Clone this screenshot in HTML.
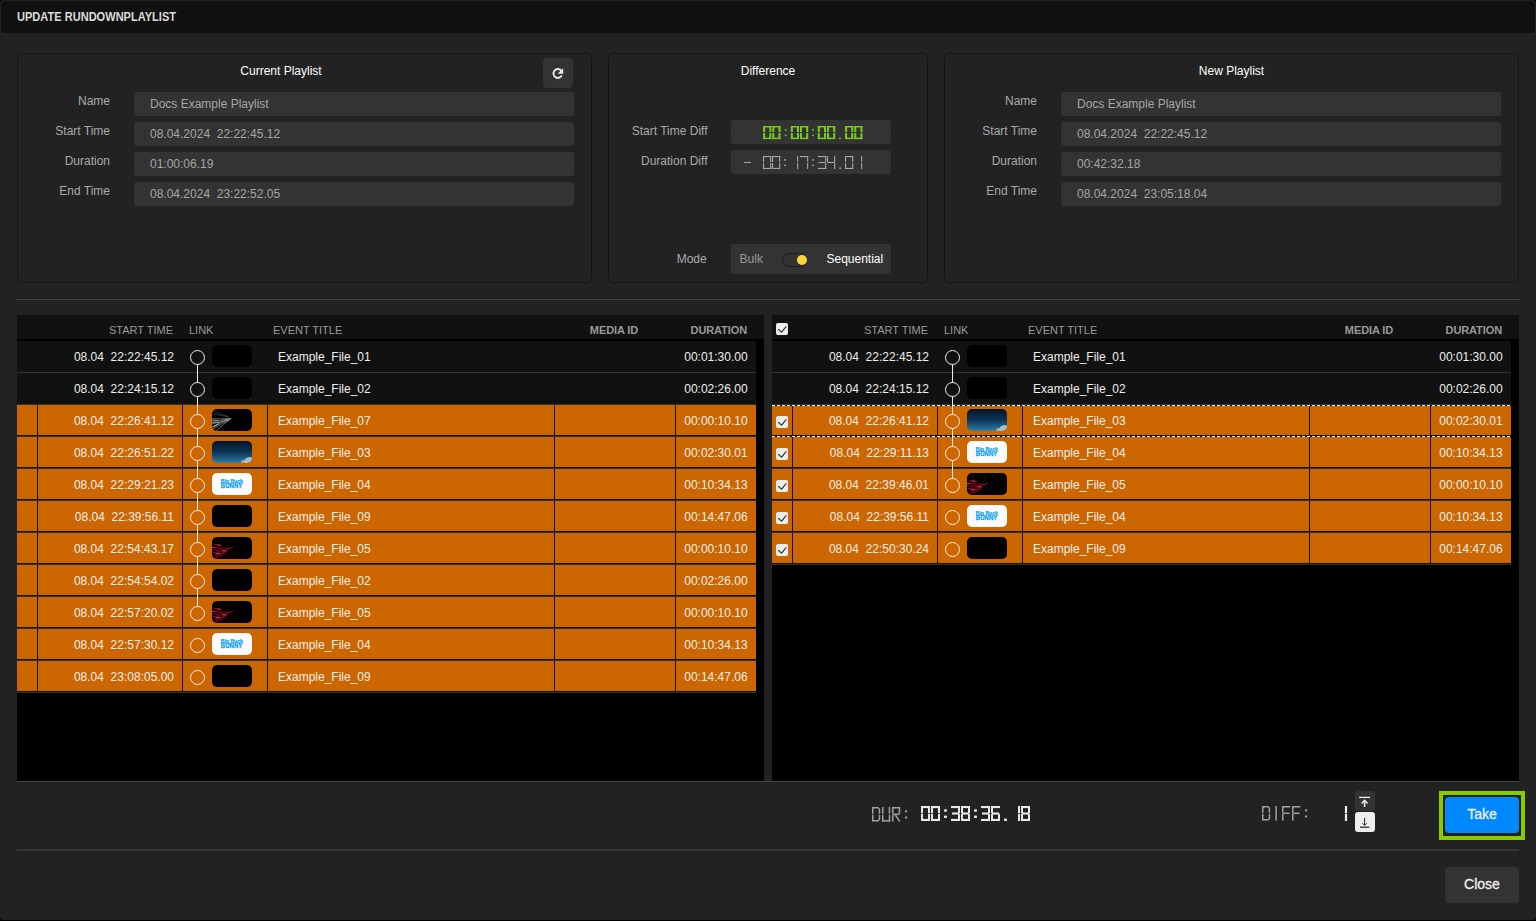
<!DOCTYPE html>
<html><head><meta charset="utf-8"><style>
html,body{margin:0;padding:0;background:#000;}
body{width:1536px;height:921px;overflow:hidden;position:relative;font-family:"Liberation Sans", sans-serif;}
.dlg{position:absolute;left:0;top:0;width:1536px;height:920px;background:#222;border-radius:4px;}
.r{position:absolute;}
.t{position:absolute;white-space:nowrap;}
.cb{width:12px;height:12px;background:#eee;border-radius:2px;}
.cb svg{position:absolute;left:0;top:0;}
</style></head><body>
<div class="dlg"></div>
<div class="r" style="left:1px;top:1px;width:1534px;height:32px;background:#111;border-radius:4px;"></div>
<div class="t" style="top:9.84px;font-size:12px;line-height:14px;color:#dcdcdc;font-weight:bold;left:17px;transform:scaleX(0.921);transform-origin:0 0;">UPDATE RUNDOWNPLAYLIST</div>
<div class="r" style="left:17px;top:53px;width:575px;height:230px;background:transparent;border:1px solid #141414;border-radius:5px;box-sizing:border-box;"></div>
<div class="r" style="left:608px;top:53px;width:320px;height:230px;background:transparent;border:1px solid #141414;border-radius:5px;box-sizing:border-box;"></div>
<div class="r" style="left:944px;top:53px;width:575px;height:230px;background:transparent;border:1px solid #141414;border-radius:5px;box-sizing:border-box;"></div>
<div class="t" style="top:63.84px;font-size:12px;line-height:14px;color:#fff;left:81.0px;width:400px;text-align:center;">Current Playlist</div>
<div class="r" style="left:134px;top:92px;width:440px;height:24px;background:#333;border-radius:3px;"></div>
<div class="t" style="top:93.84px;font-size:12px;line-height:14px;color:#aaa;right:1426px;text-align:right;">Name</div>
<div class="t" style="top:96.84px;font-size:12px;line-height:14px;color:#a6a6a6;left:150px;">Docs Example Playlist</div>
<div class="r" style="left:134px;top:122px;width:440px;height:24px;background:#333;border-radius:3px;"></div>
<div class="t" style="top:123.84px;font-size:12px;line-height:14px;color:#aaa;right:1426px;text-align:right;">Start Time</div>
<div class="t" style="top:126.84px;font-size:12px;line-height:14px;color:#a6a6a6;left:150px;">08.04.2024&nbsp;&nbsp;22:22:45.12</div>
<div class="r" style="left:134px;top:152px;width:440px;height:24px;background:#333;border-radius:3px;"></div>
<div class="t" style="top:153.84px;font-size:12px;line-height:14px;color:#aaa;right:1426px;text-align:right;">Duration</div>
<div class="t" style="top:156.84px;font-size:12px;line-height:14px;color:#a6a6a6;left:150px;">01:00:06.19</div>
<div class="r" style="left:134px;top:182px;width:440px;height:24px;background:#333;border-radius:3px;"></div>
<div class="t" style="top:183.84px;font-size:12px;line-height:14px;color:#aaa;right:1426px;text-align:right;">End Time</div>
<div class="t" style="top:186.84px;font-size:12px;line-height:14px;color:#a6a6a6;left:150px;">08.04.2024&nbsp;&nbsp;23:22:52.05</div>
<div class="r" style="left:543px;top:58px;width:30px;height:30px;background:#333;border-radius:4px;"></div>
<svg class="r" style="left:551px;top:67px" width="14" height="13" viewBox="0 0 14 13"><path d="M10.2 3.6 A4.4 4.4 0 1 0 10.8 8.4" fill="none" stroke="#eee" stroke-width="1.9"/><path d="M12.2 1.2 L12.2 6.8 L6.6 6.8 Z" fill="#eee"/></svg>
<div class="t" style="top:63.84px;font-size:12px;line-height:14px;color:#fff;left:568.0px;width:400px;text-align:center;">Difference</div>
<div class="t" style="top:124.14px;font-size:12px;line-height:14px;color:#aaa;right:828.5px;text-align:right;">Start Time Diff</div>
<div class="t" style="top:154.14px;font-size:12px;line-height:14px;color:#aaa;right:828.5px;text-align:right;">Duration Diff</div>
<div class="r" style="left:731px;top:120px;width:160px;height:24px;background:#333;border-radius:3px;"></div>
<div class="r" style="left:731px;top:150px;width:160px;height:24px;background:#333;border-radius:3px;"></div>
<svg class="r" style="left:763px;top:126px;overflow:visible" width="104.4" height="14.1" viewBox="0 0 104.4 14.1"><g fill="#7acc1c"><rect x="0.10" y="0.00" width="8.20" height="1.45"/><rect x="6.30" y="0.00" width="2.00" height="6.05"/><rect x="6.30" y="7.05" width="2.00" height="6.05"/><rect x="0.10" y="11.65" width="8.20" height="1.45"/><rect x="0.10" y="7.05" width="2.00" height="6.05"/><rect x="0.10" y="0.00" width="2.00" height="6.05"/><rect x="9.30" y="0.00" width="8.20" height="1.45"/><rect x="15.50" y="0.00" width="2.00" height="6.05"/><rect x="15.50" y="7.05" width="2.00" height="6.05"/><rect x="9.30" y="11.65" width="8.20" height="1.45"/><rect x="9.30" y="7.05" width="2.00" height="6.05"/><rect x="9.30" y="0.00" width="2.00" height="6.05"/><rect x="21.80" y="3.18" width="1.80" height="1.50"/><rect x="21.80" y="8.68" width="1.80" height="1.50"/><rect x="27.80" y="0.00" width="8.20" height="1.45"/><rect x="34.00" y="0.00" width="2.00" height="6.05"/><rect x="34.00" y="7.05" width="2.00" height="6.05"/><rect x="27.80" y="11.65" width="8.20" height="1.45"/><rect x="27.80" y="7.05" width="2.00" height="6.05"/><rect x="27.80" y="0.00" width="2.00" height="6.05"/><rect x="37.00" y="0.00" width="8.20" height="1.45"/><rect x="43.20" y="0.00" width="2.00" height="6.05"/><rect x="43.20" y="7.05" width="2.00" height="6.05"/><rect x="37.00" y="11.65" width="8.20" height="1.45"/><rect x="37.00" y="7.05" width="2.00" height="6.05"/><rect x="37.00" y="0.00" width="2.00" height="6.05"/><rect x="49.10" y="3.18" width="1.80" height="1.50"/><rect x="49.10" y="8.68" width="1.80" height="1.50"/><rect x="54.80" y="0.00" width="8.20" height="1.45"/><rect x="61.00" y="0.00" width="2.00" height="6.05"/><rect x="61.00" y="7.05" width="2.00" height="6.05"/><rect x="54.80" y="11.65" width="8.20" height="1.45"/><rect x="54.80" y="7.05" width="2.00" height="6.05"/><rect x="54.80" y="0.00" width="2.00" height="6.05"/><rect x="64.00" y="0.00" width="8.20" height="1.45"/><rect x="70.20" y="0.00" width="2.00" height="6.05"/><rect x="70.20" y="7.05" width="2.00" height="6.05"/><rect x="64.00" y="11.65" width="8.20" height="1.45"/><rect x="64.00" y="7.05" width="2.00" height="6.05"/><rect x="64.00" y="0.00" width="2.00" height="6.05"/><rect x="76.10" y="11.60" width="1.80" height="1.50"/><rect x="82.10" y="0.00" width="8.20" height="1.45"/><rect x="88.30" y="0.00" width="2.00" height="6.05"/><rect x="88.30" y="7.05" width="2.00" height="6.05"/><rect x="82.10" y="11.65" width="8.20" height="1.45"/><rect x="82.10" y="7.05" width="2.00" height="6.05"/><rect x="82.10" y="0.00" width="2.00" height="6.05"/><rect x="91.30" y="0.00" width="8.20" height="1.45"/><rect x="97.50" y="0.00" width="2.00" height="6.05"/><rect x="97.50" y="7.05" width="2.00" height="6.05"/><rect x="91.30" y="11.65" width="8.20" height="1.45"/><rect x="91.30" y="7.05" width="2.00" height="6.05"/><rect x="91.30" y="0.00" width="2.00" height="6.05"/></g></svg>
<svg class="r" style="left:744.8px;top:156px;overflow:visible" width="122.7" height="14.0" viewBox="0 0 122.7 14.0"><g fill="#a8a8a8"><rect x="18.00" y="0.00" width="8.20" height="1.10"/><rect x="25.10" y="0.00" width="1.10" height="6.00"/><rect x="25.10" y="7.00" width="1.10" height="6.00"/><rect x="18.00" y="11.90" width="8.20" height="1.10"/><rect x="18.00" y="7.00" width="1.10" height="6.00"/><rect x="18.00" y="0.00" width="1.10" height="6.00"/><rect x="27.00" y="0.00" width="8.20" height="1.10"/><rect x="34.10" y="0.00" width="1.10" height="6.00"/><rect x="34.10" y="7.00" width="1.10" height="6.00"/><rect x="27.00" y="11.90" width="8.20" height="1.10"/><rect x="27.00" y="7.00" width="1.10" height="6.00"/><rect x="27.00" y="0.00" width="1.10" height="6.00"/><rect x="39.25" y="3.15" width="1.70" height="1.50"/><rect x="39.25" y="8.61" width="1.70" height="1.50"/><rect x="52.10" y="0.00" width="1.10" height="6.00"/><rect x="52.10" y="7.00" width="1.10" height="6.00"/><rect x="55.00" y="0.00" width="8.20" height="1.10"/><rect x="62.10" y="0.00" width="1.10" height="6.00"/><rect x="62.10" y="7.00" width="1.10" height="6.00"/><rect x="67.25" y="3.15" width="1.70" height="1.50"/><rect x="67.25" y="8.61" width="1.70" height="1.50"/><rect x="73.00" y="0.00" width="8.20" height="1.10"/><rect x="80.10" y="0.00" width="1.10" height="6.00"/><rect x="73.55" y="5.95" width="7.10" height="1.10"/><rect x="80.10" y="7.00" width="1.10" height="6.00"/><rect x="73.00" y="11.90" width="8.20" height="1.10"/><rect x="82.00" y="0.00" width="1.10" height="6.00"/><rect x="82.55" y="5.95" width="7.10" height="1.10"/><rect x="89.10" y="0.00" width="1.10" height="6.00"/><rect x="89.10" y="7.00" width="1.10" height="6.00"/><rect x="94.25" y="11.50" width="1.70" height="1.50"/><rect x="100.00" y="0.00" width="8.20" height="1.10"/><rect x="107.10" y="0.00" width="1.10" height="6.00"/><rect x="107.10" y="7.00" width="1.10" height="6.00"/><rect x="100.00" y="11.90" width="8.20" height="1.10"/><rect x="100.00" y="7.00" width="1.10" height="6.00"/><rect x="100.00" y="0.00" width="1.10" height="6.00"/><rect x="116.10" y="0.00" width="1.10" height="6.00"/><rect x="116.10" y="7.00" width="1.10" height="6.00"/></g></svg>
<div class="r" style="left:743.8px;top:162px;width:7.2px;height:1.1px;background:#a8a8a8;"></div>
<div class="t" style="top:251.54px;font-size:12px;line-height:14px;color:#aaa;right:829.3px;text-align:right;">Mode</div>
<div class="r" style="left:731px;top:244px;width:160px;height:30px;background:#333;border-radius:3px;"></div>
<div class="t" style="top:251.54px;font-size:12px;line-height:14px;color:#999;left:739.6px;">Bulk</div>
<div class="r" style="left:782px;top:253px;width:25px;height:14px;background:#333;border-radius:7px;border:1px solid #1c1c1c;box-sizing:border-box;"></div>
<div class="r" style="left:796.8px;top:255px;width:10px;height:10px;border-radius:50%;background:#ffd43b"></div>
<div class="t" style="top:251.54px;font-size:12px;line-height:14px;color:#fff;left:826.5px;">Sequential</div>
<div class="t" style="top:63.84px;font-size:12px;line-height:14px;color:#fff;left:1031.5px;width:400px;text-align:center;">New Playlist</div>
<div class="r" style="left:1061px;top:92px;width:440px;height:24px;background:#333;border-radius:3px;"></div>
<div class="t" style="top:93.84px;font-size:12px;line-height:14px;color:#aaa;right:499px;text-align:right;">Name</div>
<div class="t" style="top:96.84px;font-size:12px;line-height:14px;color:#a6a6a6;left:1077px;">Docs Example Playlist</div>
<div class="r" style="left:1061px;top:122px;width:440px;height:24px;background:#333;border-radius:3px;"></div>
<div class="t" style="top:123.84px;font-size:12px;line-height:14px;color:#aaa;right:499px;text-align:right;">Start Time</div>
<div class="t" style="top:126.84px;font-size:12px;line-height:14px;color:#a6a6a6;left:1077px;">08.04.2024&nbsp;&nbsp;22:22:45.12</div>
<div class="r" style="left:1061px;top:152px;width:440px;height:24px;background:#333;border-radius:3px;"></div>
<div class="t" style="top:153.84px;font-size:12px;line-height:14px;color:#aaa;right:499px;text-align:right;">Duration</div>
<div class="t" style="top:156.84px;font-size:12px;line-height:14px;color:#a6a6a6;left:1077px;">00:42:32.18</div>
<div class="r" style="left:1061px;top:182px;width:440px;height:24px;background:#333;border-radius:3px;"></div>
<div class="t" style="top:183.84px;font-size:12px;line-height:14px;color:#aaa;right:499px;text-align:right;">End Time</div>
<div class="t" style="top:186.84px;font-size:12px;line-height:14px;color:#a6a6a6;left:1077px;">08.04.2024&nbsp;&nbsp;23:05:18.04</div>
<div class="r" style="left:17px;top:298px;width:1502px;height:1px;background:#1d1d1d;"></div>
<div class="r" style="left:17px;top:299px;width:1502px;height:1px;background:#424242;"></div>
<div class="r" style="left:17px;top:315px;width:747px;height:467px;background:#000;"></div>
<div class="r" style="left:17px;top:315px;width:747px;height:24px;background:#111;"></div>
<div class="r" style="left:17px;top:781px;width:747px;height:1px;background:#444;"></div>
<div class="t" style="top:323.69px;font-size:11px;line-height:13px;color:#9a9a9a;right:1363px;text-align:right;">START TIME</div>
<div class="t" style="top:323.69px;font-size:11px;line-height:13px;color:#9a9a9a;left:189px;">LINK</div>
<div class="t" style="top:323.69px;font-size:11px;line-height:13px;color:#9a9a9a;left:273px;">EVENT TITLE</div>
<div class="t" style="top:323.69px;font-size:11px;line-height:13px;color:#999;font-weight:bold;letter-spacing:-0.1px;left:554.0px;width:120px;text-align:center;">MEDIA ID</div>
<div class="t" style="top:323.69px;font-size:11px;line-height:13px;color:#999;font-weight:bold;letter-spacing:-0.1px;right:789px;text-align:right;">DURATION</div>
<div class="r" style="left:17px;top:341px;width:739px;height:31px;background:#111;"></div>
<div class="r" style="left:17px;top:372px;width:739px;height:1px;background:#333;"></div>
<div class="t" style="top:349.84px;font-size:12px;line-height:14px;color:#eee;right:1362px;text-align:right;">08.04&nbsp;&nbsp;22:22:45.12</div>
<div class="t" style="top:349.84px;font-size:12px;line-height:14px;color:#eee;left:278px;">Example_File_01</div>
<div class="t" style="top:349.84px;font-size:12px;line-height:14px;color:#eee;right:788.4px;text-align:right;">00:01:30.00</div>
<div class="r" style="left:212px;top:345px;width:40px;height:22px;border-radius:5px;overflow:hidden;background:#000"></div>
<div class="r" style="left:17px;top:373px;width:739px;height:31px;background:#111;"></div>
<div class="r" style="left:17px;top:404px;width:739px;height:1px;background:#333;"></div>
<div class="t" style="top:381.84px;font-size:12px;line-height:14px;color:#eee;right:1362px;text-align:right;">08.04&nbsp;&nbsp;22:24:15.12</div>
<div class="t" style="top:381.84px;font-size:12px;line-height:14px;color:#eee;left:278px;">Example_File_02</div>
<div class="t" style="top:381.84px;font-size:12px;line-height:14px;color:#eee;right:788.4px;text-align:right;">00:02:26.00</div>
<div class="r" style="left:212px;top:377px;width:40px;height:22px;border-radius:5px;overflow:hidden;background:#000"></div>
<div class="r" style="left:17px;top:405px;width:739px;height:31px;background:#111;"></div>
<div class="r" style="left:17px;top:436px;width:739px;height:1px;background:#333;"></div>
<div class="r" style="left:17px;top:405px;width:20px;height:30px;background:#cc6600;"></div>
<div class="r" style="left:38px;top:405px;width:144px;height:30px;background:#cc6600;"></div>
<div class="r" style="left:183px;top:405px;width:84px;height:30px;background:#cc6600;"></div>
<div class="r" style="left:268px;top:405px;width:286px;height:30px;background:#cc6600;"></div>
<div class="r" style="left:555px;top:405px;width:120px;height:30px;background:#cc6600;"></div>
<div class="r" style="left:676px;top:405px;width:80px;height:30px;background:#cc6600;"></div>
<div class="t" style="top:413.84px;font-size:12px;line-height:14px;color:#eee;right:1362px;text-align:right;">08.04&nbsp;&nbsp;22:26:41.12</div>
<div class="t" style="top:413.84px;font-size:12px;line-height:14px;color:#eee;left:278px;">Example_File_07</div>
<div class="t" style="top:413.84px;font-size:12px;line-height:14px;color:#eee;right:788.4px;text-align:right;">00:00:10.10</div>
<div class="r" style="left:212px;top:409px;width:40px;height:22px;border-radius:5px;overflow:hidden;background:#000"><svg class="r" style="left:0;top:0" width="40" height="22"><g stroke="#bbb" stroke-width="0.6" fill="none" opacity="0.9"><path d="M0 10 L19.5 9.5"/><path d="M0 12.5 L19 9.8"/><path d="M0 15 L18.5 10"/><path d="M0 17.5 L18 10.3"/><path d="M1 20 L17.5 10.5"/><path d="M4 22 L17 11"/><path d="M0 19 L8 13 L16 10.5"/></g><g stroke="#ddd" stroke-width="0.8" opacity="0.8"><path d="M0 11 L6 11.5"/><path d="M0 14 L7 13"/><path d="M1 18 L7 15"/></g><g stroke="#666" stroke-width="0.5" fill="none"><path d="M3 2.5 L16 7.5"/><path d="M2 5 L17 8"/></g></svg></div>
<div class="r" style="left:17px;top:437px;width:739px;height:31px;background:#111;"></div>
<div class="r" style="left:17px;top:468px;width:739px;height:1px;background:#333;"></div>
<div class="r" style="left:17px;top:437px;width:20px;height:30px;background:#cc6600;"></div>
<div class="r" style="left:38px;top:437px;width:144px;height:30px;background:#cc6600;"></div>
<div class="r" style="left:183px;top:437px;width:84px;height:30px;background:#cc6600;"></div>
<div class="r" style="left:268px;top:437px;width:286px;height:30px;background:#cc6600;"></div>
<div class="r" style="left:555px;top:437px;width:120px;height:30px;background:#cc6600;"></div>
<div class="r" style="left:676px;top:437px;width:80px;height:30px;background:#cc6600;"></div>
<div class="t" style="top:445.84px;font-size:12px;line-height:14px;color:#eee;right:1362px;text-align:right;">08.04&nbsp;&nbsp;22:26:51.22</div>
<div class="t" style="top:445.84px;font-size:12px;line-height:14px;color:#eee;left:278px;">Example_File_03</div>
<div class="t" style="top:445.84px;font-size:12px;line-height:14px;color:#eee;right:788.4px;text-align:right;">00:02:30.01</div>
<div class="r" style="left:212px;top:441px;width:40px;height:22px;border-radius:5px;overflow:hidden;background:linear-gradient(#021428,#0a3456 50%,#2f7fa6)"><div class="r" style="left:32px;top:15.5px;width:11px;height:9px;border-radius:6px 6px 0 0;background:#c0cdd2;opacity:0.85"></div><div class="r" style="left:28.5px;top:19px;width:7px;height:5px;border-radius:4px;background:#b0bec4;opacity:0.75"></div></div>
<div class="r" style="left:17px;top:469px;width:739px;height:31px;background:#111;"></div>
<div class="r" style="left:17px;top:500px;width:739px;height:1px;background:#333;"></div>
<div class="r" style="left:17px;top:469px;width:20px;height:30px;background:#cc6600;"></div>
<div class="r" style="left:38px;top:469px;width:144px;height:30px;background:#cc6600;"></div>
<div class="r" style="left:183px;top:469px;width:84px;height:30px;background:#cc6600;"></div>
<div class="r" style="left:268px;top:469px;width:286px;height:30px;background:#cc6600;"></div>
<div class="r" style="left:555px;top:469px;width:120px;height:30px;background:#cc6600;"></div>
<div class="r" style="left:676px;top:469px;width:80px;height:30px;background:#cc6600;"></div>
<div class="t" style="top:477.84px;font-size:12px;line-height:14px;color:#eee;right:1362px;text-align:right;">08.04&nbsp;&nbsp;22:29:21.23</div>
<div class="t" style="top:477.84px;font-size:12px;line-height:14px;color:#eee;left:278px;">Example_File_04</div>
<div class="t" style="top:477.84px;font-size:12px;line-height:14px;color:#eee;right:788.4px;text-align:right;">00:10:34.13</div>
<div class="r" style="left:212px;top:473px;width:40px;height:22px;border-radius:5px;overflow:hidden;background:#fbfbfb"><svg class="r" style="left:0;top:0" width="40" height="22"><g font-family="Liberation Sans" font-weight="bold" fill="#10a6f0" stroke="#10a6f0" stroke-width="0.25"><text x="8.8" y="10.2" font-size="6.2" textLength="22" lengthAdjust="spacingAndGlyphs">Big Buck</text><text x="8.8" y="15.2" font-size="6.4" textLength="21.5" lengthAdjust="spacingAndGlyphs" fill="#0a9cf0">BUNNY</text></g></svg></div>
<div class="r" style="left:17px;top:501px;width:739px;height:31px;background:#111;"></div>
<div class="r" style="left:17px;top:532px;width:739px;height:1px;background:#333;"></div>
<div class="r" style="left:17px;top:501px;width:20px;height:30px;background:#cc6600;"></div>
<div class="r" style="left:38px;top:501px;width:144px;height:30px;background:#cc6600;"></div>
<div class="r" style="left:183px;top:501px;width:84px;height:30px;background:#cc6600;"></div>
<div class="r" style="left:268px;top:501px;width:286px;height:30px;background:#cc6600;"></div>
<div class="r" style="left:555px;top:501px;width:120px;height:30px;background:#cc6600;"></div>
<div class="r" style="left:676px;top:501px;width:80px;height:30px;background:#cc6600;"></div>
<div class="t" style="top:509.84px;font-size:12px;line-height:14px;color:#eee;right:1362px;text-align:right;">08.04&nbsp;&nbsp;22:39:56.11</div>
<div class="t" style="top:509.84px;font-size:12px;line-height:14px;color:#eee;left:278px;">Example_File_09</div>
<div class="t" style="top:509.84px;font-size:12px;line-height:14px;color:#eee;right:788.4px;text-align:right;">00:14:47.06</div>
<div class="r" style="left:212px;top:505px;width:40px;height:22px;border-radius:5px;overflow:hidden;background:#000"></div>
<div class="r" style="left:17px;top:533px;width:739px;height:31px;background:#111;"></div>
<div class="r" style="left:17px;top:564px;width:739px;height:1px;background:#333;"></div>
<div class="r" style="left:17px;top:533px;width:20px;height:30px;background:#cc6600;"></div>
<div class="r" style="left:38px;top:533px;width:144px;height:30px;background:#cc6600;"></div>
<div class="r" style="left:183px;top:533px;width:84px;height:30px;background:#cc6600;"></div>
<div class="r" style="left:268px;top:533px;width:286px;height:30px;background:#cc6600;"></div>
<div class="r" style="left:555px;top:533px;width:120px;height:30px;background:#cc6600;"></div>
<div class="r" style="left:676px;top:533px;width:80px;height:30px;background:#cc6600;"></div>
<div class="t" style="top:541.84px;font-size:12px;line-height:14px;color:#eee;right:1362px;text-align:right;">08.04&nbsp;&nbsp;22:54:43.17</div>
<div class="t" style="top:541.84px;font-size:12px;line-height:14px;color:#eee;left:278px;">Example_File_05</div>
<div class="t" style="top:541.84px;font-size:12px;line-height:14px;color:#eee;right:788.4px;text-align:right;">00:00:10.10</div>
<div class="r" style="left:212px;top:537px;width:40px;height:22px;border-radius:5px;overflow:hidden;background:#000"><svg class="r" style="left:0;top:0" width="40" height="22"><g stroke="#b50c1c" stroke-width="1" fill="none" opacity="0.9"><path d="M2 7.5 L10 8.5"/><path d="M0 10.5 L18 11.5 L21 10"/><path d="M0 13 L16 13"/><path d="M1 15.5 L15 14.5"/><path d="M2 18 L14 16"/><path d="M3 20 L11 18"/></g><g stroke="#e05090" stroke-width="0.8" opacity="0.8"><path d="M0 10.5 L3 10.5"/><path d="M10 13.5 L14 13.5"/><path d="M4 16.5 L8 16.5"/><path d="M5 8 L8 8"/></g><g fill="#8a0a18"><circle cx="6" cy="4" r="0.7"/><circle cx="13" cy="3.5" r="0.6"/><circle cx="18" cy="2.5" r="0.6"/><circle cx="18" cy="5.2" r="0.6"/><circle cx="26" cy="3" r="0.6"/><circle cx="25" cy="9.5" r="0.6"/><circle cx="20" cy="15.5" r="0.5"/><circle cx="29" cy="6.5" r="0.4"/></g></svg></div>
<div class="r" style="left:17px;top:565px;width:739px;height:31px;background:#111;"></div>
<div class="r" style="left:17px;top:596px;width:739px;height:1px;background:#333;"></div>
<div class="r" style="left:17px;top:565px;width:20px;height:30px;background:#cc6600;"></div>
<div class="r" style="left:38px;top:565px;width:144px;height:30px;background:#cc6600;"></div>
<div class="r" style="left:183px;top:565px;width:84px;height:30px;background:#cc6600;"></div>
<div class="r" style="left:268px;top:565px;width:286px;height:30px;background:#cc6600;"></div>
<div class="r" style="left:555px;top:565px;width:120px;height:30px;background:#cc6600;"></div>
<div class="r" style="left:676px;top:565px;width:80px;height:30px;background:#cc6600;"></div>
<div class="t" style="top:573.84px;font-size:12px;line-height:14px;color:#eee;right:1362px;text-align:right;">08.04&nbsp;&nbsp;22:54:54.02</div>
<div class="t" style="top:573.84px;font-size:12px;line-height:14px;color:#eee;left:278px;">Example_File_02</div>
<div class="t" style="top:573.84px;font-size:12px;line-height:14px;color:#eee;right:788.4px;text-align:right;">00:02:26.00</div>
<div class="r" style="left:212px;top:569px;width:40px;height:22px;border-radius:5px;overflow:hidden;background:#000"></div>
<div class="r" style="left:17px;top:597px;width:739px;height:31px;background:#111;"></div>
<div class="r" style="left:17px;top:628px;width:739px;height:1px;background:#333;"></div>
<div class="r" style="left:17px;top:597px;width:20px;height:30px;background:#cc6600;"></div>
<div class="r" style="left:38px;top:597px;width:144px;height:30px;background:#cc6600;"></div>
<div class="r" style="left:183px;top:597px;width:84px;height:30px;background:#cc6600;"></div>
<div class="r" style="left:268px;top:597px;width:286px;height:30px;background:#cc6600;"></div>
<div class="r" style="left:555px;top:597px;width:120px;height:30px;background:#cc6600;"></div>
<div class="r" style="left:676px;top:597px;width:80px;height:30px;background:#cc6600;"></div>
<div class="t" style="top:605.84px;font-size:12px;line-height:14px;color:#eee;right:1362px;text-align:right;">08.04&nbsp;&nbsp;22:57:20.02</div>
<div class="t" style="top:605.84px;font-size:12px;line-height:14px;color:#eee;left:278px;">Example_File_05</div>
<div class="t" style="top:605.84px;font-size:12px;line-height:14px;color:#eee;right:788.4px;text-align:right;">00:00:10.10</div>
<div class="r" style="left:212px;top:601px;width:40px;height:22px;border-radius:5px;overflow:hidden;background:#000"><svg class="r" style="left:0;top:0" width="40" height="22"><g stroke="#b50c1c" stroke-width="1" fill="none" opacity="0.9"><path d="M2 7.5 L10 8.5"/><path d="M0 10.5 L18 11.5 L21 10"/><path d="M0 13 L16 13"/><path d="M1 15.5 L15 14.5"/><path d="M2 18 L14 16"/><path d="M3 20 L11 18"/></g><g stroke="#e05090" stroke-width="0.8" opacity="0.8"><path d="M0 10.5 L3 10.5"/><path d="M10 13.5 L14 13.5"/><path d="M4 16.5 L8 16.5"/><path d="M5 8 L8 8"/></g><g fill="#8a0a18"><circle cx="6" cy="4" r="0.7"/><circle cx="13" cy="3.5" r="0.6"/><circle cx="18" cy="2.5" r="0.6"/><circle cx="18" cy="5.2" r="0.6"/><circle cx="26" cy="3" r="0.6"/><circle cx="25" cy="9.5" r="0.6"/><circle cx="20" cy="15.5" r="0.5"/><circle cx="29" cy="6.5" r="0.4"/></g></svg></div>
<div class="r" style="left:17px;top:629px;width:739px;height:31px;background:#111;"></div>
<div class="r" style="left:17px;top:660px;width:739px;height:1px;background:#333;"></div>
<div class="r" style="left:17px;top:629px;width:20px;height:30px;background:#cc6600;"></div>
<div class="r" style="left:38px;top:629px;width:144px;height:30px;background:#cc6600;"></div>
<div class="r" style="left:183px;top:629px;width:84px;height:30px;background:#cc6600;"></div>
<div class="r" style="left:268px;top:629px;width:286px;height:30px;background:#cc6600;"></div>
<div class="r" style="left:555px;top:629px;width:120px;height:30px;background:#cc6600;"></div>
<div class="r" style="left:676px;top:629px;width:80px;height:30px;background:#cc6600;"></div>
<div class="t" style="top:637.84px;font-size:12px;line-height:14px;color:#eee;right:1362px;text-align:right;">08.04&nbsp;&nbsp;22:57:30.12</div>
<div class="t" style="top:637.84px;font-size:12px;line-height:14px;color:#eee;left:278px;">Example_File_04</div>
<div class="t" style="top:637.84px;font-size:12px;line-height:14px;color:#eee;right:788.4px;text-align:right;">00:10:34.13</div>
<div class="r" style="left:212px;top:633px;width:40px;height:22px;border-radius:5px;overflow:hidden;background:#fbfbfb"><svg class="r" style="left:0;top:0" width="40" height="22"><g font-family="Liberation Sans" font-weight="bold" fill="#10a6f0" stroke="#10a6f0" stroke-width="0.25"><text x="8.8" y="10.2" font-size="6.2" textLength="22" lengthAdjust="spacingAndGlyphs">Big Buck</text><text x="8.8" y="15.2" font-size="6.4" textLength="21.5" lengthAdjust="spacingAndGlyphs" fill="#0a9cf0">BUNNY</text></g></svg></div>
<div class="r" style="left:17px;top:661px;width:739px;height:31px;background:#111;"></div>
<div class="r" style="left:17px;top:692px;width:739px;height:1px;background:#333;"></div>
<div class="r" style="left:17px;top:661px;width:20px;height:30px;background:#cc6600;"></div>
<div class="r" style="left:38px;top:661px;width:144px;height:30px;background:#cc6600;"></div>
<div class="r" style="left:183px;top:661px;width:84px;height:30px;background:#cc6600;"></div>
<div class="r" style="left:268px;top:661px;width:286px;height:30px;background:#cc6600;"></div>
<div class="r" style="left:555px;top:661px;width:120px;height:30px;background:#cc6600;"></div>
<div class="r" style="left:676px;top:661px;width:80px;height:30px;background:#cc6600;"></div>
<div class="t" style="top:669.84px;font-size:12px;line-height:14px;color:#eee;right:1362px;text-align:right;">08.04&nbsp;&nbsp;23:08:05.00</div>
<div class="t" style="top:669.84px;font-size:12px;line-height:14px;color:#eee;left:278px;">Example_File_09</div>
<div class="t" style="top:669.84px;font-size:12px;line-height:14px;color:#eee;right:788.4px;text-align:right;">00:14:47.06</div>
<div class="r" style="left:212px;top:665px;width:40px;height:22px;border-radius:5px;overflow:hidden;background:#000"></div>
<div class="r" style="left:17px;top:691px;width:739px;height:1px;background:#111;"></div>
<div class="r" style="left:17px;top:692px;width:739px;height:1px;background:#333;"></div>
<div class="r" style="left:197px;top:357px;width:1px;height:256px;background:#eee;"></div>
<div class="r" style="left:190.0px;top:349.6px;width:13.2px;height:13.2px;border:1px solid #eee;border-radius:50%;background:#111"></div>
<div class="r" style="left:190.0px;top:381.6px;width:13.2px;height:13.2px;border:1px solid #eee;border-radius:50%;background:#111"></div>
<div class="r" style="left:190.0px;top:413.6px;width:13.2px;height:13.2px;border:1px solid #eee;border-radius:50%;background:#cc6600"></div>
<div class="r" style="left:190.0px;top:445.6px;width:13.2px;height:13.2px;border:1px solid #eee;border-radius:50%;background:#cc6600"></div>
<div class="r" style="left:190.0px;top:477.6px;width:13.2px;height:13.2px;border:1px solid #eee;border-radius:50%;background:#cc6600"></div>
<div class="r" style="left:190.0px;top:509.6px;width:13.2px;height:13.2px;border:1px solid #eee;border-radius:50%;background:#cc6600"></div>
<div class="r" style="left:190.0px;top:541.6px;width:13.2px;height:13.2px;border:1px solid #eee;border-radius:50%;background:#cc6600"></div>
<div class="r" style="left:190.0px;top:573.6px;width:13.2px;height:13.2px;border:1px solid #eee;border-radius:50%;background:#cc6600"></div>
<div class="r" style="left:190.0px;top:605.6px;width:13.2px;height:13.2px;border:1px solid #eee;border-radius:50%;background:#cc6600"></div>
<div class="r" style="left:190.0px;top:637.6px;width:13.2px;height:13.2px;border:1px solid #eee;border-radius:50%;background:#cc6600"></div>
<div class="r" style="left:190.0px;top:669.6px;width:13.2px;height:13.2px;border:1px solid #eee;border-radius:50%;background:#cc6600"></div>
<div class="r" style="left:772px;top:315px;width:747px;height:467px;background:#000;"></div>
<div class="r" style="left:772px;top:315px;width:747px;height:24px;background:#111;"></div>
<div class="r" style="left:772px;top:781px;width:747px;height:1px;background:#444;"></div>
<div class="r cb" style="left:776px;top:323px"><svg width="12" height="12"><path d="M2.2 6.2 L5.6 9.1 L10.3 3.3" stroke="#333" stroke-width="1.15" fill="none"/></svg></div>
<div class="t" style="top:323.69px;font-size:11px;line-height:13px;color:#9a9a9a;right:608px;text-align:right;">START TIME</div>
<div class="t" style="top:323.69px;font-size:11px;line-height:13px;color:#9a9a9a;left:944px;">LINK</div>
<div class="t" style="top:323.69px;font-size:11px;line-height:13px;color:#9a9a9a;left:1028px;">EVENT TITLE</div>
<div class="t" style="top:323.69px;font-size:11px;line-height:13px;color:#999;font-weight:bold;letter-spacing:-0.1px;left:1309.0px;width:120px;text-align:center;">MEDIA ID</div>
<div class="t" style="top:323.69px;font-size:11px;line-height:13px;color:#999;font-weight:bold;letter-spacing:-0.1px;right:34px;text-align:right;">DURATION</div>
<div class="r" style="left:772px;top:341px;width:739px;height:31px;background:#111;"></div>
<div class="r" style="left:772px;top:372px;width:739px;height:1px;background:#333;"></div>
<div class="t" style="top:349.84px;font-size:12px;line-height:14px;color:#eee;right:607px;text-align:right;">08.04&nbsp;&nbsp;22:22:45.12</div>
<div class="t" style="top:349.84px;font-size:12px;line-height:14px;color:#eee;left:1033px;">Example_File_01</div>
<div class="t" style="top:349.84px;font-size:12px;line-height:14px;color:#eee;right:33.40000000000009px;text-align:right;">00:01:30.00</div>
<div class="r" style="left:967px;top:345px;width:40px;height:22px;border-radius:5px;overflow:hidden;background:#000"></div>
<div class="r" style="left:772px;top:373px;width:739px;height:31px;background:#111;"></div>
<div class="r" style="left:772px;top:404px;width:739px;height:1px;background:#333;"></div>
<div class="t" style="top:381.84px;font-size:12px;line-height:14px;color:#eee;right:607px;text-align:right;">08.04&nbsp;&nbsp;22:24:15.12</div>
<div class="t" style="top:381.84px;font-size:12px;line-height:14px;color:#eee;left:1033px;">Example_File_02</div>
<div class="t" style="top:381.84px;font-size:12px;line-height:14px;color:#eee;right:33.40000000000009px;text-align:right;">00:02:26.00</div>
<div class="r" style="left:967px;top:377px;width:40px;height:22px;border-radius:5px;overflow:hidden;background:#000"></div>
<div class="r" style="left:772px;top:405px;width:739px;height:31px;background:#111;"></div>
<div class="r" style="left:772px;top:436px;width:739px;height:1px;background:#333;"></div>
<div class="r" style="left:772px;top:405px;width:20px;height:30px;background:#cc6600;"></div>
<div class="r" style="left:793px;top:405px;width:144px;height:30px;background:#cc6600;"></div>
<div class="r" style="left:938px;top:405px;width:84px;height:30px;background:#cc6600;"></div>
<div class="r" style="left:1023px;top:405px;width:286px;height:30px;background:#cc6600;"></div>
<div class="r" style="left:1310px;top:405px;width:120px;height:30px;background:#cc6600;"></div>
<div class="r" style="left:1431px;top:405px;width:80px;height:30px;background:#cc6600;"></div>
<div class="r cb" style="left:776px;top:416px"><svg width="12" height="12"><path d="M2.2 6.2 L5.6 9.1 L10.3 3.3" stroke="#333" stroke-width="1.15" fill="none"/></svg></div>
<div class="t" style="top:413.84px;font-size:12px;line-height:14px;color:#eee;right:607px;text-align:right;">08.04&nbsp;&nbsp;22:26:41.12</div>
<div class="t" style="top:413.84px;font-size:12px;line-height:14px;color:#eee;left:1033px;">Example_File_03</div>
<div class="t" style="top:413.84px;font-size:12px;line-height:14px;color:#eee;right:33.40000000000009px;text-align:right;">00:02:30.01</div>
<div class="r" style="left:967px;top:409px;width:40px;height:22px;border-radius:5px;overflow:hidden;background:linear-gradient(#021428,#0a3456 50%,#2f7fa6)"><div class="r" style="left:32px;top:15.5px;width:11px;height:9px;border-radius:6px 6px 0 0;background:#c0cdd2;opacity:0.85"></div><div class="r" style="left:28.5px;top:19px;width:7px;height:5px;border-radius:4px;background:#b0bec4;opacity:0.75"></div></div>
<div class="r" style="left:772px;top:437px;width:739px;height:31px;background:#111;"></div>
<div class="r" style="left:772px;top:468px;width:739px;height:1px;background:#333;"></div>
<div class="r" style="left:772px;top:437px;width:20px;height:30px;background:#cc6600;"></div>
<div class="r" style="left:793px;top:437px;width:144px;height:30px;background:#cc6600;"></div>
<div class="r" style="left:938px;top:437px;width:84px;height:30px;background:#cc6600;"></div>
<div class="r" style="left:1023px;top:437px;width:286px;height:30px;background:#cc6600;"></div>
<div class="r" style="left:1310px;top:437px;width:120px;height:30px;background:#cc6600;"></div>
<div class="r" style="left:1431px;top:437px;width:80px;height:30px;background:#cc6600;"></div>
<div class="r cb" style="left:776px;top:448px"><svg width="12" height="12"><path d="M2.2 6.2 L5.6 9.1 L10.3 3.3" stroke="#333" stroke-width="1.15" fill="none"/></svg></div>
<div class="t" style="top:445.84px;font-size:12px;line-height:14px;color:#eee;right:607px;text-align:right;">08.04&nbsp;&nbsp;22:29:11.13</div>
<div class="t" style="top:445.84px;font-size:12px;line-height:14px;color:#eee;left:1033px;">Example_File_04</div>
<div class="t" style="top:445.84px;font-size:12px;line-height:14px;color:#eee;right:33.40000000000009px;text-align:right;">00:10:34.13</div>
<div class="r" style="left:967px;top:441px;width:40px;height:22px;border-radius:5px;overflow:hidden;background:#fbfbfb"><svg class="r" style="left:0;top:0" width="40" height="22"><g font-family="Liberation Sans" font-weight="bold" fill="#10a6f0" stroke="#10a6f0" stroke-width="0.25"><text x="8.8" y="10.2" font-size="6.2" textLength="22" lengthAdjust="spacingAndGlyphs">Big Buck</text><text x="8.8" y="15.2" font-size="6.4" textLength="21.5" lengthAdjust="spacingAndGlyphs" fill="#0a9cf0">BUNNY</text></g></svg></div>
<div class="r" style="left:772px;top:469px;width:739px;height:31px;background:#111;"></div>
<div class="r" style="left:772px;top:500px;width:739px;height:1px;background:#333;"></div>
<div class="r" style="left:772px;top:469px;width:20px;height:30px;background:#cc6600;"></div>
<div class="r" style="left:793px;top:469px;width:144px;height:30px;background:#cc6600;"></div>
<div class="r" style="left:938px;top:469px;width:84px;height:30px;background:#cc6600;"></div>
<div class="r" style="left:1023px;top:469px;width:286px;height:30px;background:#cc6600;"></div>
<div class="r" style="left:1310px;top:469px;width:120px;height:30px;background:#cc6600;"></div>
<div class="r" style="left:1431px;top:469px;width:80px;height:30px;background:#cc6600;"></div>
<div class="r cb" style="left:776px;top:480px"><svg width="12" height="12"><path d="M2.2 6.2 L5.6 9.1 L10.3 3.3" stroke="#333" stroke-width="1.15" fill="none"/></svg></div>
<div class="t" style="top:477.84px;font-size:12px;line-height:14px;color:#eee;right:607px;text-align:right;">08.04&nbsp;&nbsp;22:39:46.01</div>
<div class="t" style="top:477.84px;font-size:12px;line-height:14px;color:#eee;left:1033px;">Example_File_05</div>
<div class="t" style="top:477.84px;font-size:12px;line-height:14px;color:#eee;right:33.40000000000009px;text-align:right;">00:00:10.10</div>
<div class="r" style="left:967px;top:473px;width:40px;height:22px;border-radius:5px;overflow:hidden;background:#000"><svg class="r" style="left:0;top:0" width="40" height="22"><g stroke="#b50c1c" stroke-width="1" fill="none" opacity="0.9"><path d="M2 7.5 L10 8.5"/><path d="M0 10.5 L18 11.5 L21 10"/><path d="M0 13 L16 13"/><path d="M1 15.5 L15 14.5"/><path d="M2 18 L14 16"/><path d="M3 20 L11 18"/></g><g stroke="#e05090" stroke-width="0.8" opacity="0.8"><path d="M0 10.5 L3 10.5"/><path d="M10 13.5 L14 13.5"/><path d="M4 16.5 L8 16.5"/><path d="M5 8 L8 8"/></g><g fill="#8a0a18"><circle cx="6" cy="4" r="0.7"/><circle cx="13" cy="3.5" r="0.6"/><circle cx="18" cy="2.5" r="0.6"/><circle cx="18" cy="5.2" r="0.6"/><circle cx="26" cy="3" r="0.6"/><circle cx="25" cy="9.5" r="0.6"/><circle cx="20" cy="15.5" r="0.5"/><circle cx="29" cy="6.5" r="0.4"/></g></svg></div>
<div class="r" style="left:772px;top:501px;width:739px;height:31px;background:#111;"></div>
<div class="r" style="left:772px;top:532px;width:739px;height:1px;background:#333;"></div>
<div class="r" style="left:772px;top:501px;width:20px;height:30px;background:#cc6600;"></div>
<div class="r" style="left:793px;top:501px;width:144px;height:30px;background:#cc6600;"></div>
<div class="r" style="left:938px;top:501px;width:84px;height:30px;background:#cc6600;"></div>
<div class="r" style="left:1023px;top:501px;width:286px;height:30px;background:#cc6600;"></div>
<div class="r" style="left:1310px;top:501px;width:120px;height:30px;background:#cc6600;"></div>
<div class="r" style="left:1431px;top:501px;width:80px;height:30px;background:#cc6600;"></div>
<div class="r cb" style="left:776px;top:512px"><svg width="12" height="12"><path d="M2.2 6.2 L5.6 9.1 L10.3 3.3" stroke="#333" stroke-width="1.15" fill="none"/></svg></div>
<div class="t" style="top:509.84px;font-size:12px;line-height:14px;color:#eee;right:607px;text-align:right;">08.04&nbsp;&nbsp;22:39:56.11</div>
<div class="t" style="top:509.84px;font-size:12px;line-height:14px;color:#eee;left:1033px;">Example_File_04</div>
<div class="t" style="top:509.84px;font-size:12px;line-height:14px;color:#eee;right:33.40000000000009px;text-align:right;">00:10:34.13</div>
<div class="r" style="left:967px;top:505px;width:40px;height:22px;border-radius:5px;overflow:hidden;background:#fbfbfb"><svg class="r" style="left:0;top:0" width="40" height="22"><g font-family="Liberation Sans" font-weight="bold" fill="#10a6f0" stroke="#10a6f0" stroke-width="0.25"><text x="8.8" y="10.2" font-size="6.2" textLength="22" lengthAdjust="spacingAndGlyphs">Big Buck</text><text x="8.8" y="15.2" font-size="6.4" textLength="21.5" lengthAdjust="spacingAndGlyphs" fill="#0a9cf0">BUNNY</text></g></svg></div>
<div class="r" style="left:772px;top:533px;width:739px;height:31px;background:#111;"></div>
<div class="r" style="left:772px;top:564px;width:739px;height:1px;background:#333;"></div>
<div class="r" style="left:772px;top:533px;width:20px;height:30px;background:#cc6600;"></div>
<div class="r" style="left:793px;top:533px;width:144px;height:30px;background:#cc6600;"></div>
<div class="r" style="left:938px;top:533px;width:84px;height:30px;background:#cc6600;"></div>
<div class="r" style="left:1023px;top:533px;width:286px;height:30px;background:#cc6600;"></div>
<div class="r" style="left:1310px;top:533px;width:120px;height:30px;background:#cc6600;"></div>
<div class="r" style="left:1431px;top:533px;width:80px;height:30px;background:#cc6600;"></div>
<div class="r cb" style="left:776px;top:544px"><svg width="12" height="12"><path d="M2.2 6.2 L5.6 9.1 L10.3 3.3" stroke="#333" stroke-width="1.15" fill="none"/></svg></div>
<div class="t" style="top:541.84px;font-size:12px;line-height:14px;color:#eee;right:607px;text-align:right;">08.04&nbsp;&nbsp;22:50:30.24</div>
<div class="t" style="top:541.84px;font-size:12px;line-height:14px;color:#eee;left:1033px;">Example_File_09</div>
<div class="t" style="top:541.84px;font-size:12px;line-height:14px;color:#eee;right:33.40000000000009px;text-align:right;">00:14:47.06</div>
<div class="r" style="left:967px;top:537px;width:40px;height:22px;border-radius:5px;overflow:hidden;background:#000"></div>
<div class="r" style="left:772px;top:563px;width:739px;height:1px;background:#111;"></div>
<div class="r" style="left:772px;top:564px;width:739px;height:1px;background:#333;"></div>
<div class="r" style="left:772px;top:405px;width:739px;height:1px;background:repeating-linear-gradient(90deg,#fff 0 3px,#000 3px 5px)"></div>
<div class="r" style="left:772px;top:436px;width:739px;height:1px;background:repeating-linear-gradient(90deg,#fff 0 3px,#000 3px 5px)"></div>
<div class="r" style="left:952px;top:357px;width:1px;height:128px;background:#eee;"></div>
<div class="r" style="left:945.0px;top:349.6px;width:13.2px;height:13.2px;border:1px solid #eee;border-radius:50%;background:#111"></div>
<div class="r" style="left:945.0px;top:381.6px;width:13.2px;height:13.2px;border:1px solid #eee;border-radius:50%;background:#111"></div>
<div class="r" style="left:945.0px;top:413.6px;width:13.2px;height:13.2px;border:1px solid #eee;border-radius:50%;background:#cc6600"></div>
<div class="r" style="left:945.0px;top:445.6px;width:13.2px;height:13.2px;border:1px solid #eee;border-radius:50%;background:#cc6600"></div>
<div class="r" style="left:945.0px;top:477.6px;width:13.2px;height:13.2px;border:1px solid #eee;border-radius:50%;background:#cc6600"></div>
<div class="r" style="left:945.0px;top:509.6px;width:13.2px;height:13.2px;border:1px solid #eee;border-radius:50%;background:#cc6600"></div>
<div class="r" style="left:945.0px;top:541.6px;width:13.2px;height:13.2px;border:1px solid #eee;border-radius:50%;background:#cc6600"></div>
<div class="r" style="left:17px;top:781px;width:1502px;height:1px;background:#444;"></div>
<svg class="r" style="left:871.7px;top:806.6px;overflow:visible" width="44.8" height="15.6" viewBox="0 0 44.8 15.6"><g fill="#a0a0a0"><path d="M0.00 0 H6.25 L8.20 1.95 V6.80 H6.70 V2.35 L5.85 1.50 H1.50 V6.80 H0.00 Z"/><path d="M0.00 14.60 H6.25 L8.20 12.65 V7.80 H6.70 V12.25 L5.85 13.10 H1.50 V7.80 H0.00 Z"/><rect x="16.70" y="0.00" width="1.50" height="6.80"/><rect x="16.70" y="7.80" width="1.50" height="6.80"/><rect x="10.00" y="13.10" width="8.20" height="1.50"/><rect x="10.00" y="7.80" width="1.50" height="6.80"/><rect x="10.00" y="0.00" width="1.50" height="6.80"/><rect x="20.00" y="0.00" width="8.20" height="1.50"/><rect x="26.70" y="0.00" width="1.50" height="6.80"/><rect x="20.00" y="7.80" width="1.50" height="6.80"/><rect x="20.00" y="0.00" width="1.50" height="6.80"/><rect x="20.75" y="6.55" width="6.70" height="1.50"/><path d="M23.28 8.05 L27.90 14.60" stroke="#a0a0a0" stroke-width="1.50" fill="none"/><rect x="33.05" y="3.38" width="2.10" height="2.00"/><rect x="33.05" y="9.51" width="2.10" height="2.00"/></g></svg>
<svg class="r" style="left:921.3px;top:806px;overflow:visible" width="113.3" height="16.0" viewBox="0 0 113.3 16.0"><g fill="#e8e8e8"><rect x="0.00" y="0.00" width="9.00" height="2.10"/><rect x="7.00" y="0.00" width="2.00" height="7.15"/><rect x="7.00" y="7.85" width="2.00" height="7.15"/><rect x="0.00" y="12.90" width="9.00" height="2.10"/><rect x="0.00" y="7.85" width="2.00" height="7.15"/><rect x="0.00" y="0.00" width="2.00" height="7.15"/><rect x="10.00" y="0.00" width="9.00" height="2.10"/><rect x="17.00" y="0.00" width="2.00" height="7.15"/><rect x="17.00" y="7.85" width="2.00" height="7.15"/><rect x="10.00" y="12.90" width="9.00" height="2.10"/><rect x="10.00" y="7.85" width="2.00" height="7.15"/><rect x="10.00" y="0.00" width="2.00" height="7.15"/><rect x="23.10" y="3.30" width="2.80" height="2.40"/><rect x="23.10" y="9.60" width="2.80" height="2.40"/><rect x="30.00" y="0.00" width="9.00" height="2.10"/><rect x="37.00" y="0.00" width="2.00" height="7.15"/><rect x="31.00" y="6.45" width="7.00" height="2.10"/><rect x="37.00" y="7.85" width="2.00" height="7.15"/><rect x="30.00" y="12.90" width="9.00" height="2.10"/><rect x="40.00" y="0.00" width="9.00" height="2.10"/><rect x="47.00" y="0.00" width="2.00" height="7.15"/><rect x="47.00" y="7.85" width="2.00" height="7.15"/><rect x="40.00" y="12.90" width="9.00" height="2.10"/><rect x="40.00" y="7.85" width="2.00" height="7.15"/><rect x="40.00" y="0.00" width="2.00" height="7.15"/><rect x="41.00" y="6.45" width="7.00" height="2.10"/><rect x="53.10" y="3.30" width="2.80" height="2.40"/><rect x="53.10" y="9.60" width="2.80" height="2.40"/><rect x="60.00" y="0.00" width="9.00" height="2.10"/><rect x="67.00" y="0.00" width="2.00" height="7.15"/><rect x="61.00" y="6.45" width="7.00" height="2.10"/><rect x="67.00" y="7.85" width="2.00" height="7.15"/><rect x="60.00" y="12.90" width="9.00" height="2.10"/><rect x="70.00" y="0.00" width="9.00" height="2.10"/><rect x="70.00" y="0.00" width="2.00" height="7.15"/><rect x="71.00" y="6.45" width="7.00" height="2.10"/><rect x="70.00" y="7.85" width="2.00" height="7.15"/><rect x="77.00" y="7.85" width="2.00" height="7.15"/><rect x="70.00" y="12.90" width="9.00" height="2.10"/><rect x="83.10" y="12.60" width="2.80" height="2.40"/><rect x="97.00" y="0.00" width="2.00" height="7.15"/><rect x="97.00" y="7.85" width="2.00" height="7.15"/><rect x="100.00" y="0.00" width="9.00" height="2.10"/><rect x="107.00" y="0.00" width="2.00" height="7.15"/><rect x="107.00" y="7.85" width="2.00" height="7.15"/><rect x="100.00" y="12.90" width="9.00" height="2.10"/><rect x="100.00" y="7.85" width="2.00" height="7.15"/><rect x="100.00" y="0.00" width="2.00" height="7.15"/><rect x="101.00" y="6.45" width="7.00" height="2.10"/></g></svg>
<svg class="r" style="left:1261.5px;top:806.3px;overflow:visible" width="55.0" height="15.6" viewBox="0 0 55.0 15.6"><g fill="#a0a0a0"><path d="M0.00 0 H6.25 L8.20 1.95 V6.80 H6.70 V2.35 L5.85 1.50 H1.50 V6.80 H0.00 Z"/><path d="M0.00 14.60 H6.25 L8.20 12.65 V7.80 H6.70 V12.25 L5.85 13.10 H1.50 V7.80 H0.00 Z"/><rect x="13.35" y="0.00" width="1.50" height="14.60"/><rect x="20.00" y="0.00" width="8.20" height="1.50"/><rect x="20.00" y="7.80" width="1.50" height="6.80"/><rect x="20.00" y="0.00" width="1.50" height="6.80"/><rect x="20.75" y="6.55" width="6.70" height="1.50"/><rect x="30.00" y="0.00" width="8.20" height="1.50"/><rect x="30.00" y="7.80" width="1.50" height="6.80"/><rect x="30.00" y="0.00" width="1.50" height="6.80"/><rect x="30.75" y="6.55" width="6.70" height="1.50"/><rect x="43.05" y="3.38" width="2.10" height="2.00"/><rect x="43.05" y="9.51" width="2.10" height="2.00"/></g></svg>
<svg class="r" style="left:1337.6px;top:806px;overflow:visible" width="13.9" height="16.0" viewBox="0 0 13.9 16.0"><g fill="#eeeeee"><rect x="6.90" y="0.00" width="2.20" height="7.20"/><rect x="6.90" y="7.80" width="2.20" height="7.20"/></g></svg>
<div class="r" style="left:1355px;top:791px;width:20px;height:20px;background:#333;border-radius:3px;"></div>
<svg class="r" style="left:1355px;top:791px" width="20" height="20"><path d="M4.1 6.4 H15.1" stroke="#eee" stroke-width="1.3"/><path d="M9.6 15.9 V9.8" stroke="#eee" stroke-width="1.6"/><path d="M6.6 12.4 L9.6 9.3 L12.6 12.4" stroke="#eee" stroke-width="1.5" fill="none"/></svg>
<div class="r" style="left:1355px;top:812px;width:20px;height:20px;background:#eee;border-radius:3px;"></div>
<svg class="r" style="left:1355px;top:812px" width="20" height="20"><path d="M5 15.2 H14.3" stroke="#222" stroke-width="1.2"/><path d="M9.6 5.9 V13" stroke="#222" stroke-width="1"/><path d="M7.6 11.3 L9.6 13.3 L11.6 11.3" stroke="#222" stroke-width="1" fill="none"/></svg>
<div class="r" style="left:1439px;top:791px;width:86px;height:49px;background:transparent;border:4px solid #88cc00;box-sizing:border-box;"></div>
<div class="r" style="left:1445px;top:797px;width:74px;height:36px;background:#0088ff;border-radius:4px;"></div>
<div class="t" style="top:805.85px;font-size:14px;line-height:17px;color:#eee;left:1445.0px;width:74px;text-align:center;-webkit-text-stroke:0.3px #eee;">Take</div>
<div class="r" style="left:17px;top:849px;width:1502px;height:2px;background:#363636;"></div>
<div class="r" style="left:1445px;top:867px;width:74px;height:36px;background:#333;border-radius:4px;"></div>
<div class="t" style="top:876.25px;font-size:14px;line-height:17px;color:#eee;left:1445.0px;width:74px;text-align:center;-webkit-text-stroke:0.3px #eee;">Close</div>
</body></html>
